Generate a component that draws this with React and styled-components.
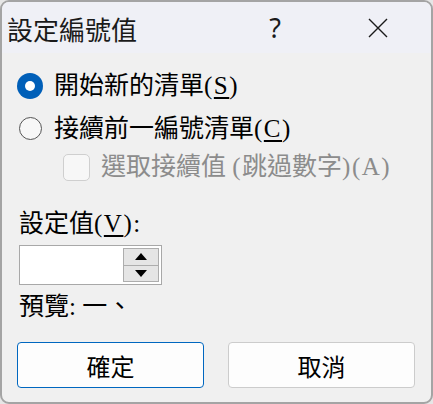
import React from "react";
import styled, { createGlobalStyle } from "styled-components";

const GlobalStyle = createGlobalStyle`
  html, body {
    margin: 0;
    padding: 0;
    background: #e6e6e6;
  }
  body {
    font-family: "Liberation Serif", "Noto Sans CJK TC", serif;
  }
`;

const Dialog = styled.div`
  width: 429px;
  height: 400px;
  margin: 0 2px 0 0;
  border: 2px solid #a4a4a4;
  border-radius: 9px;
  background: #f0f0f0;
  overflow: hidden;
  display: flex;
  flex-direction: column;
`;

const TitleBar = styled.div`
  height: 51px;
  flex: none;
  display: flex;
  align-items: center;
  background: #eff0f6;
  padding-left: 5px;
`;

const Title = styled.div`
  flex: 1;
  font-family: "Noto Sans CJK TC", sans-serif;
  font-size: 26px;
  line-height: 30px;
  color: #1a1a1a;
  margin-top: 2px;
`;

const CaptionButton = styled.div`
  width: 46px;
  height: 51px;
  display: flex;
  align-items: center;
  justify-content: center;
  margin-right: ${(p) => p.$gap}px;
  font-family: "Noto Sans", sans-serif;
  font-size: 27px;
  color: #1a1a1a;
`;

const Body = styled.div`
  flex: 1;
  display: flex;
  flex-direction: column;
  padding: 11px 16px 0 15px;
`;

const OptionRow = styled.label`
  display: flex;
  align-items: center;
  height: ${(p) => p.$h}px;
  padding-left: ${(p) => p.$indent}px;
  color: ${(p) => (p.$disabled ? "#8c8c8c" : "#000")};
  font-size: 25px;
  line-height: 28px;
`;

const Radio = styled.span`
  width: ${(p) => (p.$checked ? 26 : 23)}px;
  height: ${(p) => (p.$checked ? 26 : 23)}px;
  margin: 0 ${(p) => (p.$checked ? 11 : 12)}px 0 ${(p) => (p.$checked ? 0 : 2)}px;
  box-sizing: border-box;
  border-radius: 50%;
  flex: none;
  display: flex;
  align-items: center;
  justify-content: center;
  background: ${(p) => (p.$checked ? "#005fb8" : "#f7f7f7")};
  border: ${(p) => (p.$checked ? "none" : "1.5px solid #555")};
  &::after {
    content: "";
    display: ${(p) => (p.$checked ? "block" : "none")};
    width: 10px;
    height: 10px;
    border-radius: 50%;
    background: #fff;
  }
`;

const Checkbox = styled.span`
  width: 27px;
  height: 27px;
  box-sizing: border-box;
  border: 1.5px solid #cfcfcf;
  border-radius: 5px;
  background: #f7f7f7;
  margin-right: 11px;
  flex: none;
`;

const Latin = styled.span`
  letter-spacing: 1.5px;
`;

const Key = styled.span`
  text-decoration: underline;
  text-underline-offset: 3px;
  text-decoration-thickness: 1.5px;
`;

const FieldLabel = styled.div`
  margin-top: 25px;
  padding-left: 2px;
  font-size: 25px;
  line-height: 30px;
  color: #000;
`;

const Spin = styled.div`
  margin-top: 6px;
  width: 143px;
  height: 40px;
  box-sizing: border-box;
  border: 1px solid #a8a8a8;
  background: #fff;
  display: flex;
  justify-content: flex-end;
  padding: 2px 2px 2px 0;
  margin-left: 2px;
`;

const SpinButtons = styled.div`
  width: 36px;
  display: flex;
  flex-direction: column;
`;

const SpinButton = styled.div`
  flex: 1;
  box-sizing: border-box;
  border: 1px solid #adadad;
  background: #e5e5e5;
  display: flex;
  align-items: center;
  justify-content: center;
  & + & {
    border-top: none;
  }
`;

const Preview = styled.div`
  margin-top: 7px;
  padding-left: 2px;
  font-size: 25px;
  line-height: 30px;
  color: #000;
`;

const ButtonRow = styled.div`
  margin-top: auto;
  margin-bottom: 14px;
  display: flex;
  gap: 24px;
`;

const Button = styled.button`
  width: 187px;
  height: 46px;
  box-sizing: border-box;
  border: 1px solid ${(p) => (p.$primary ? "#0067c0" : "#cccccc")};
  border-radius: 4px;
  background: #fdfdfd;
  font-family: "Noto Sans CJK TC", sans-serif;
  font-size: 24px;
  color: #000;
  padding: 0;
  cursor: pointer;
`;

function Arrow({ up }) {
  return (
    <svg width="12" height="7" viewBox="0 0 12 7">
      <path d={up ? "M6 0 L12 7 L0 7 Z" : "M0 0 L12 0 L6 7 Z"} fill="#000" />
    </svg>
  );
}

export default function App() {
  return (
    <>
      <GlobalStyle />
      <Dialog>
        <TitleBar>
          <Title>設定編號值</Title>
          <CaptionButton $gap={57}>?</CaptionButton>
          <CaptionButton $gap={30}>
            <svg width="20" height="20" viewBox="0 0 20 20">
              <path d="M1 1 L19 19 M19 1 L1 19" stroke="#1a1a1a" strokeWidth="1.4" />
            </svg>
          </CaptionButton>
        </TitleBar>
        <Body>
          <OptionRow $h={43} $indent={0}>
            <Radio $checked />
            <span>
              開始新的清單<Latin>(<Key>S</Key>)</Latin>
            </span>
          </OptionRow>
          <OptionRow $h={43} $indent={0}>
            <Radio />
            <span>
              接續前一編號清單<Latin>(<Key>C</Key>)</Latin>
            </span>
          </OptionRow>
          <OptionRow $h={34} $indent={46} $disabled>
            <Checkbox />
            <span>
              選取接續值 <Latin>(</Latin>跳過數字<Latin>)(A)</Latin>
            </span>
          </OptionRow>
          <FieldLabel>
            設定值<Latin>(<Key>V</Key>)</Latin>:
          </FieldLabel>
          <Spin>
            <SpinButtons>
              <SpinButton>
                <Arrow up />
              </SpinButton>
              <SpinButton>
                <Arrow />
              </SpinButton>
            </SpinButtons>
          </Spin>
          <Preview>預覽: 一、</Preview>
          <ButtonRow>
            <Button $primary>確定</Button>
            <Button>取消</Button>
          </ButtonRow>
        </Body>
      </Dialog>
    </>
  );
}
